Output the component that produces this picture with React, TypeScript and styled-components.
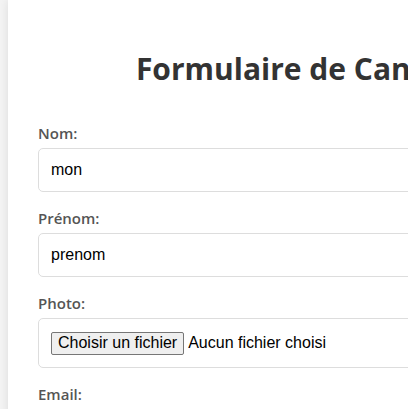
import React from 'react';
import styled, { createGlobalStyle } from 'styled-components';

const GlobalStyle = createGlobalStyle`
  html, body {
    margin: 0;
    overflow: hidden;
    background-color: #f4f4f4;
  }
  body {
    padding-left: 8px;
    font-family: "Open Sans", "Noto Sans", sans-serif;
  }
`;

const Card = styled.div`
  width: 600px;
  padding: 27px 30px 30px;
  background-color: #fff;
  box-shadow: 0 0 10px rgba(0, 0, 0, 0.1);
`;

const Title = styled.h1`
  margin: 21px 0 33px;
  font-size: 30px;
  font-weight: 700;
  line-height: 42px;
  color: #333;
  text-align: center;
`;

const Group = styled.div`
  margin-bottom: 16px;
`;

const Label = styled.label`
  display: block;
  margin-bottom: 5px;
  font-size: 15px;
  line-height: 20px;
  font-weight: 600;
  color: #555;
`;

const Input = styled.input`
  display: block;
  box-sizing: border-box;
  width: 100%;
  height: 44px;
  padding: 12px;
  border: 1px solid #ddd;
  border-radius: 5px;
  font-family: "Liberation Sans", Arial, sans-serif;
  font-size: 16px;
  color: #000;
  outline: none;
`;

const FileBox = styled.div`
  display: flex;
  align-items: center;
  gap: 4px;
  box-sizing: border-box;
  height: 50px;
  padding: 12px;
  border: 1px solid #ddd;
  border-radius: 5px;
  font-family: "Liberation Sans", Arial, sans-serif;
  font-size: 16px;
  color: #000;
`;

const FileButton = styled.button`
  height: 23px;
  padding: 0 6px;
  border: 1px solid #767676;
  border-radius: 2px;
  background-color: #efefef;
  font-family: inherit;
  font-size: 16px;
  color: #000;
`;

const fields = [
  { label: 'Nom:', value: 'mon' },
  { label: 'Prénom:', value: 'prenom' },
];

export default function App() {
  return (
    <>
      <GlobalStyle />
      <Card>
        <Title>Formulaire de Candidature</Title>
        {fields.map((f) => (
          <Group key={f.label}>
            <Label>{f.label}</Label>
            <Input type="text" defaultValue={f.value} />
          </Group>
        ))}
        <Group>
          <Label>Photo:</Label>
          <FileBox>
            <FileButton type="button">Choisir un fichier</FileButton>
            <span>Aucun fichier choisi</span>
          </FileBox>
        </Group>
        <Group>
          <Label>Email:</Label>
          <Input type="email" />
        </Group>
      </Card>
    </>
  );
}
